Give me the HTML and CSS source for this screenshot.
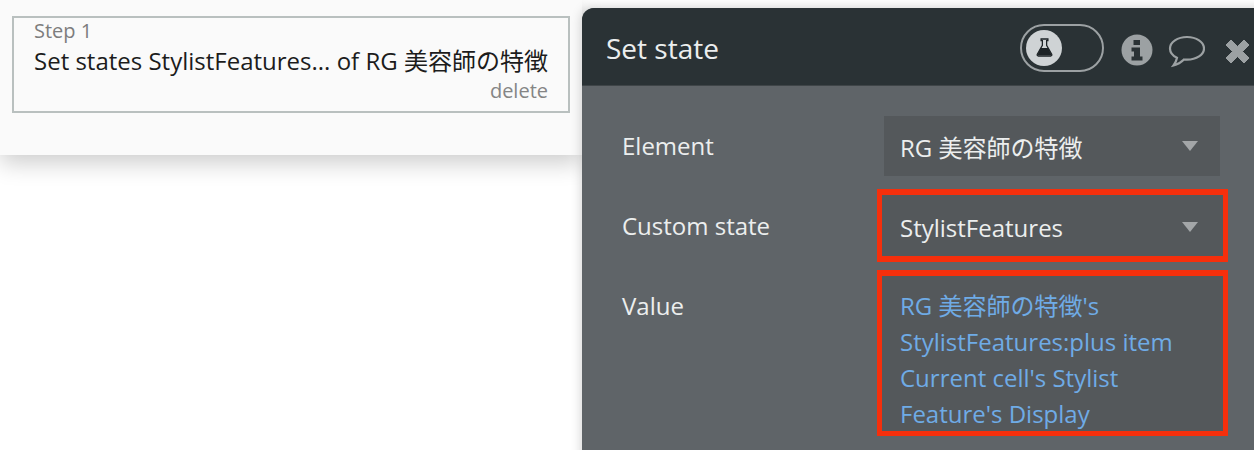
FILE: index.html
```html
<!DOCTYPE html>
<html lang="en">
<head>
<meta charset="utf-8">
<title>Set state</title>
<link rel="stylesheet" href="styles.css">
</head>
<body>
<div class="page">
  <section class="workflow">
    <div class="steps">
      <div class="step">
        <div class="step-num">Step 1</div>
        <div class="step-title">Set states StylistFeatures... of RG 美容師の特徴</div>
        <div class="step-del">delete</div>
      </div>
    </div>
  </section>
  <section class="panel">
    <header class="head">
      <h1 class="title">Set state</h1>
      <div class="toggle">
        <span class="knob">
          <svg width="17" height="19" viewBox="0 0 20 22"><path d="M6 1h8v2h-1.500v5.500l6 10.500c.5 1-.2 2-1.200 2H2.700c-1 0-1.700-1-1.200-2l6-10.500V3H6z" fill="none" stroke="#1d2326" stroke-width="1.500"/><path d="M5.600 11.500h8.800l4.200 8.500H1.400z" fill="#1d2326"/></svg>
        </span>
      </div>
      <svg class="ic-info" width="32" height="32" viewBox="0 0 32 32"><circle cx="16" cy="16" r="15.500" fill="#9ca1a3"/><path d="M12.500 6h6.500v5h-6.500zM10.500 13.500h8.500v9h2.500v4h-11v-4h2.500v-5h-2.500z" fill="#2a3235"/></svg>
      <svg class="ic-chat" width="37" height="34" viewBox="0 0 37 34"><path d="M19 2C9.500 2 2 7 2 13.500c0 4 2.800 7.300 7 9.300-.5 3-2 5.700-3.500 7.700 4-1 8-3.500 10.500-6 1 .1 2 .2 3 .2 9.500 0 17-5 17-11.200S28.500 2 19 2z" fill="none" stroke="#9ca1a3" stroke-width="2.200"/></svg>
      <svg class="ic-close" width="25" height="25" viewBox="0 0 25 25"><path d="M6 1l6.500 6.500L19 1l5 5-6.500 6.500L24 19l-5 5-6.500-6.500L6 24l-5-5 6.500-6.500L1 6z" fill="#9ca1a3" stroke="#9ca1a3" stroke-linejoin="round"/></svg>
    </header>
    <div class="form">
      <div class="row row-first">
        <div class="label">Element</div>
        <div class="field field-plain">RG 美容師の特徴<span class="caret"></span></div>
      </div>
      <div class="row">
        <div class="label">Custom state</div>
        <div class="frame"><div class="field field-framed">StylistFeatures<span class="caret"></span></div></div>
      </div>
      <div class="row">
        <div class="label">Value</div>
        <div class="frame"><div class="expr">RG 美容師の特徴's StylistFeatures:plus item Current cell's Stylist Feature's Display</div></div>
      </div>
    </div>
  </section>
</div>
</body>
</html>
```
FILE: styles.css
```css
* { box-sizing: border-box; }
html, body { margin: 0; padding: 0; }
body {
  width: 1254px;
  height: 450px;
  overflow: hidden;
  background: #fff;
  font-family: "Open Sans", "Noto Sans CJK JP", sans-serif;
}
.page { display: flex; align-items: flex-start; width: 1254px; height: 450px; overflow: hidden; }
.workflow {
  flex: 0 0 582px;
  height: 155px;
  background: #fafafa;
  box-shadow: 0 8px 22px rgba(0, 0, 0, .2);
  padding: 16px 12px 0;
}
.step {
  width: 558px;
  height: 97px;
  border: 2px solid #b9c0bf;
  padding: 0 20px 0;
  display: flex;
  flex-direction: column;
}
.step-num { font-size: 20px; line-height: 26px; color: #7d7d7d; }
.step-title { font-size: 24px; line-height: 34px; color: #1c1c1c; white-space: nowrap; }
.step-del { font-size: 20px; line-height: 26px; color: #858585; text-align: right; }
.panel {
  flex: 0 0 700px;
  height: 460px;
  margin-top: 8px;
  background: #5f6468;
  border-radius: 12px 0 0 0;
  overflow: hidden;
  position: relative;
  z-index: 1;
  box-shadow: 0 0 12px rgba(0, 0, 0, .2);
}
.head {
  height: 78px;
  background: #2a3235;
  border-bottom: 1px solid #3f4548;
  display: flex;
  align-items: center;
  padding-left: 24px;
}
.title { margin: 2px 302px 0 0; width: 112px; font-size: 28px; font-weight: 400; color: #eceeee; white-space: nowrap; }
.toggle {
  width: 84px;
  height: 48px;
  border: 2px solid #9ca1a3;
  border-radius: 24px;
  padding: 4px;
  margin: 2px 17px 0 0;
}
.knob {
  width: 36px;
  height: 36px;
  border-radius: 50%;
  background: #cfd3d5;
  display: flex;
  align-items: center;
  justify-content: center;
}
.ic-info { margin: 7px 15px 0 0; }
.ic-chat { margin: 11px 20px 0 0; }
.ic-close { margin-top: 9px; }
.form { padding-top: 25px; }
.row { display: flex; align-items: flex-start; padding-left: 40px; margin-top: 8px; }
.row-first { margin-top: 0; margin-bottom: 13px; padding-top: 5px; }
.label { width: 255px; padding-top: 20px; font-size: 24px; line-height: 34px; color: #eceeee; white-space: nowrap; }
.row-first .label { padding-top: 13px; }
.row:last-child .label { padding-top: 19px; }
.field {
  height: 60px;
  background: #54585b;
  color: #eceeee;
  font-size: 24px;
  display: flex;
  align-items: center;
  justify-content: space-between;
}
.field-plain { width: 336px; margin-left: 7px; padding: 0 22px 0 16px; }
.field-framed { padding: 3px 25px 0 18px; height: 61px; }
.caret {
  width: 0;
  height: 0;
  border-left: 8px solid transparent;
  border-right: 8px solid transparent;
  border-top: 10px solid #a3a6a8;
}
.frame { width: 351px; border: solid #f52f0c; border-width: 6px 5px; }
.row:last-child .frame { border-bottom-width: 5px; }
.expr {
  height: 155px;
  padding: 12px 18px 0;
  background: #54585b;
  color: #6fabe6;
  font-size: 24px;
  line-height: 36px;
}
```
